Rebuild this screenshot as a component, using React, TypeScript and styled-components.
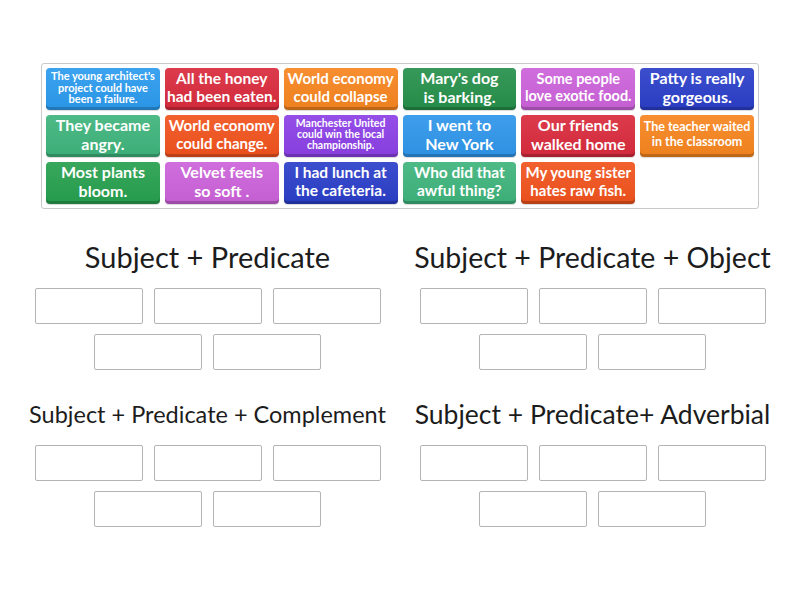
import styled, { createGlobalStyle } from 'styled-components';

const GlobalStyle = createGlobalStyle`
  html, body {
    margin: 0;
    padding: 0;
    background: #ffffff;
  }
  body {
    font-family: 'Lato', 'Liberation Sans', sans-serif;
  }
`;

const Page = styled.main`
  width: 800px;
  height: 600px;
  padding-top: 63px;
  box-sizing: border-box;
`;

const Tray = styled.section`
  margin-left: 41px;
  width: 718px;
  box-sizing: border-box;
  border: 1px solid #c9c9c9;
  border-radius: 3px;
  padding: 4px;
  display: grid;
  grid-template-columns: repeat(6, 1fr);
  grid-auto-rows: 42px;
  gap: 5px 5px;
`;

const Tile = styled.div<{ $bg: string; $size: number }>`
  background: ${(p) => p.$bg};
  background-image: linear-gradient(
    rgba(255, 255, 255, 0.08),
    rgba(0, 0, 0, 0.04)
  );
  border-radius: 4px;
  box-shadow: inset 0 -3px 0 rgba(0, 0, 0, 0.2),
    0 1px 1px rgba(0, 0, 0, 0.15);
  color: #ffffff;
  display: flex;
  align-items: center;
  justify-content: center;
  text-align: center;
  text-wrap: ${(p) => (p.$size < 12 ? 'wrap' : 'balance')};
  padding: 0 2px 3px;
  box-sizing: border-box;
  font-family: 'Lato', 'Open Sans', sans-serif;
  font-size: ${(p) => p.$size}px;
  line-height: ${(p) => (p.$size < 12 ? 1.05 : 1.15)};
  font-weight: 700;
`;

const Board = styled.div`
  margin-top: 28px;
  margin-left: 15px;
  width: 770px;
  display: grid;
  grid-template-columns: 1fr 1fr;
  row-gap: 24px;
`;

const Group = styled.div`
  display: flex;
  flex-direction: column;
  align-items: center;
`;

const Heading = styled.h2<{ $size: number }>`
  margin: 0;
  height: 40px;
  line-height: 40px;
  font-family: 'Lato', 'Open Sans', sans-serif;
  font-weight: 400;
  font-size: ${(p) => p.$size}px;
  color: #1c1c1c;
  white-space: nowrap;
`;

const Zones = styled.div`
  margin-top: 11px;
  width: 346px;
  display: flex;
  flex-wrap: wrap;
  justify-content: center;
  gap: 10px 11px;
`;

const Zone = styled.div`
  width: 108px;
  height: 36px;
  box-sizing: border-box;
  border: 1px solid #b4b4b4;
  border-radius: 2px;
  background: #ffffff;
`;

const tiles = [
  { text: "The young architect's project could have been a failure.", bg: '#2b9bee', size: 11 },
  { text: 'All the honey had been eaten.', bg: '#d92b3d', size: 15.5 },
  { text: 'World economy could collapse', bg: '#f7851f', size: 15 },
  { text: "Mary's dog is barking.", bg: '#26904b', size: 16 },
  { text: 'Some people love exotic food.', bg: '#cc62da', size: 14.5 },
  { text: 'Patty is really gorgeous.', bg: '#2b3fc9', size: 16 },
  { text: 'They became angry.', bg: '#3fb47c', size: 16 },
  { text: 'World economy could change.', bg: '#f1531d', size: 15 },
  { text: 'Manchester United could win the local championship.', bg: '#8c40e6', size: 10.5 },
  { text: 'I went to New York', bg: '#2f96ea', size: 16 },
  { text: 'Our friends walked home', bg: '#d92b3d', size: 16 },
  { text: 'The teacher waited in the classroom', bg: '#f7851f', size: 12.5 },
  { text: 'Most plants bloom.', bg: '#27a04f', size: 16 },
  { text: 'Velvet feels so soft .', bg: '#cc62da', size: 16 },
  { text: 'I had lunch at the cafeteria.', bg: '#2b3fc9', size: 15.5 },
  { text: 'Who did that awful thing?', bg: '#3fb47c', size: 15.5 },
  { text: 'My young sister hates raw fish.', bg: '#f1531d', size: 15 },
];

const groups = [
  { title: 'Subject + Predicate', size: 29 },
  { title: 'Subject + Predicate + Object', size: 28.5 },
  { title: 'Subject + Predicate + Complement', size: 23.5 },
  { title: 'Subject + Predicate+ Adverbial', size: 26.5 },
];

export default function App() {
  return (
    <Page>
      <GlobalStyle />
      <Tray>
        {tiles.map((t) => (
          <Tile key={t.text} $bg={t.bg} $size={t.size}>
            {t.text}
          </Tile>
        ))}
      </Tray>

      <Board>
        {groups.map((g) => (
          <Group key={g.title}>
            <Heading $size={g.size}>{g.title}</Heading>
            <Zones>
              {[0, 1, 2, 3, 4].map((i) => (
                <Zone key={i} />
              ))}
            </Zones>
          </Group>
        ))}
      </Board>
    </Page>
  );
}
